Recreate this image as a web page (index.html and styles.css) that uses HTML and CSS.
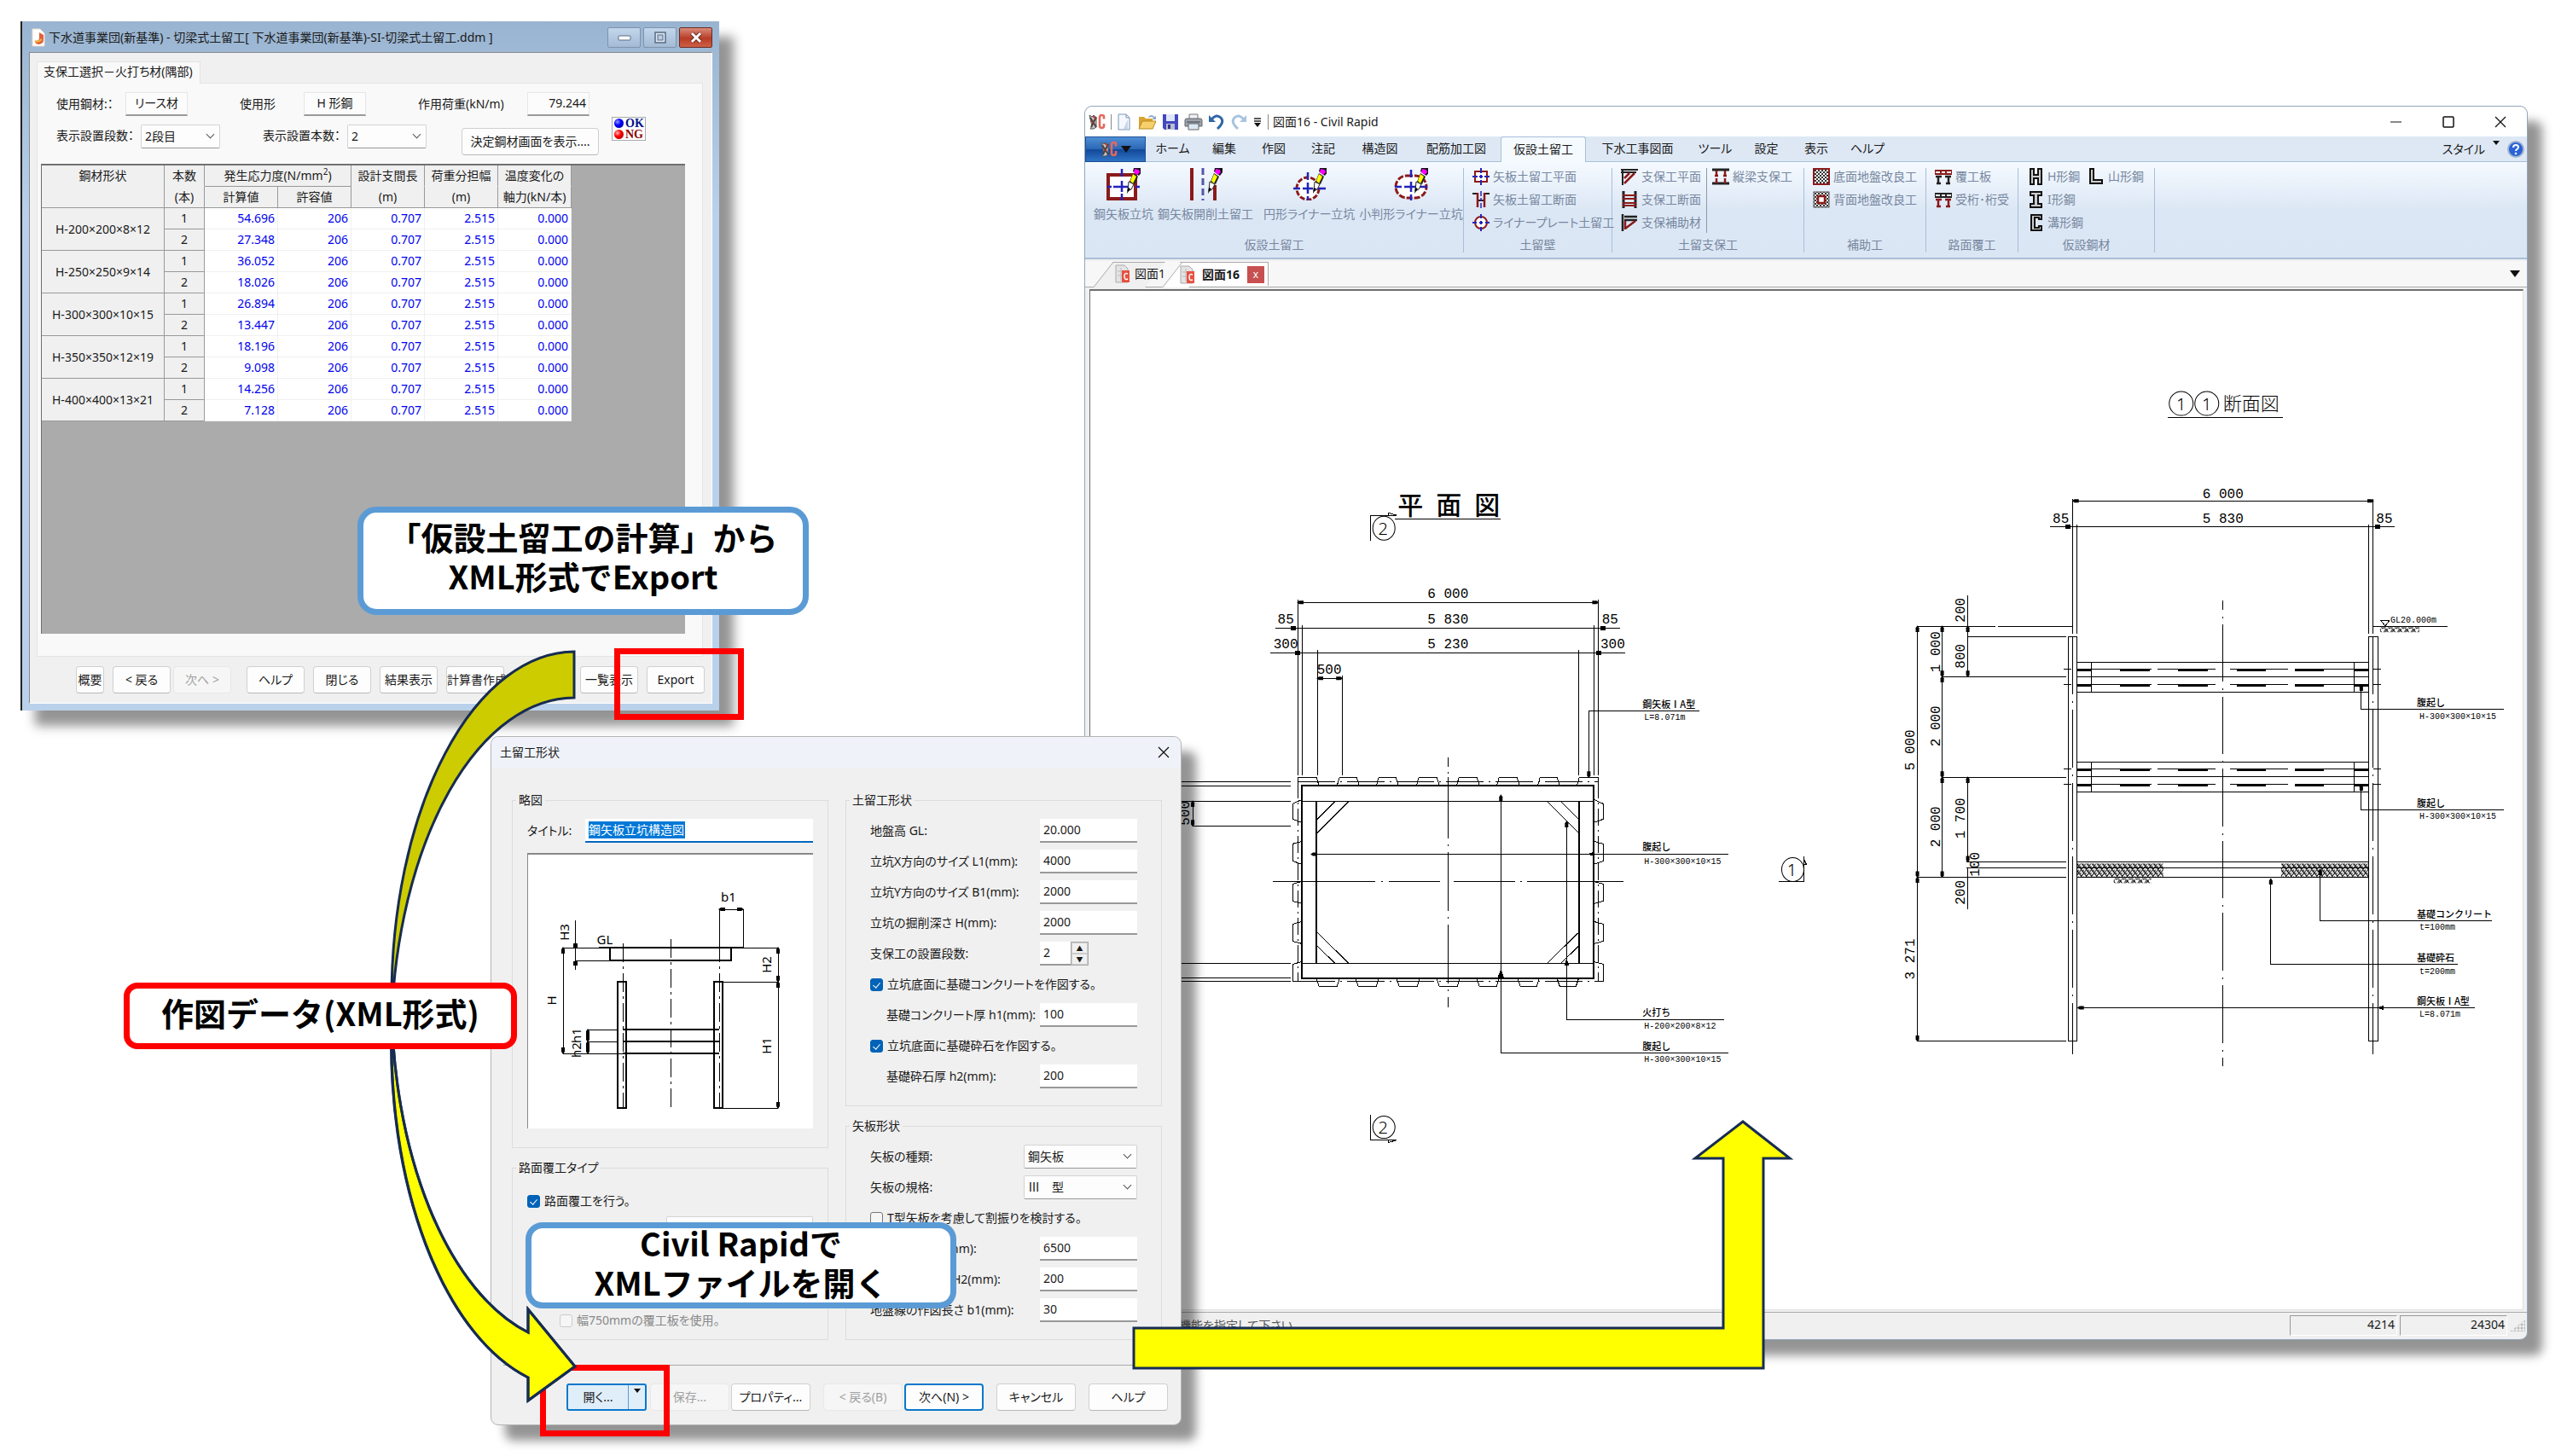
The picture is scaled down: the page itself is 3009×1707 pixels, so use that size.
FILE: index.html
```html
<!DOCTYPE html>
<html lang="ja">
<head>
<meta charset="utf-8">
<title>仮設土留工 データ連携</title>
<link rel="stylesheet" href="styles.css">
</head>
<body>
<svg class="defs" aria-hidden="true">
  <defs>
    <symbol id="logo" viewBox="0 0 20 20">
      <path d="M1 2l3 2 2-2 3 3v11l-3 2H2l2-3z" fill="#c9c4c0" stroke="#555" stroke-width="1"/>
      <path d="M2 5l7 11M9 4L3 16" stroke="#444" stroke-width="2"/>
      <path d="M5 3l4 4M3 9l4 3" stroke="#a33" stroke-width="1.5"/>
      <path d="M18 6.500V4q0-2-2.500-2T13 4.500v10q0 2.500 2.500 2.500t2.500-2.500V12" fill="none" stroke="#e5685c" stroke-width="2.600"/>
    </symbol>
    <symbol id="pen" viewBox="0 0 18 30">
      <path d="M9 0h9v5l-3 4-7-5z" fill="#111"/><path d="M10 1l5 1 1 3-3 3-4-3z" fill="#f0f"/>
      <path d="M8 6l6 4-4 9-6-3z" fill="#222"/><path d="M8 7l4 3-4 8-3-3z" fill="#ff0"/>
      <path d="M3 16l6 3-3 6-4 2z" fill="#fff" stroke="#222"/><path d="M2 23l3 1-4 6z" fill="#000"/>
    </symbol>
    <symbol id="docicon" viewBox="0 0 18 22">
      <path d="M1 1h10l4 4v16H1z" fill="#e4e4e4" stroke="#aaa"/><path d="M3 8h9M3 13h9M7 4v15" stroke="#bbb"/>
      <path d="M8 7h9v14H8z" fill="#e8503f"/><path d="M15 11q-4-2-4 3t4 3" fill="none" stroke="#fff" stroke-width="1.500"/>
    </symbol>
    <pattern id="dots" width="4" height="4" patternUnits="userSpaceOnUse"><rect width="4" height="4" fill="#fff"/><path d="M0 0h2v2H0zM2 2h2v2H2z" fill="#333"/></pattern>
    <pattern id="gravel" width="6" height="8" patternUnits="userSpaceOnUse"><path d="M0 0l3 4-3 4M6 0L3 4l3 4M1 2l2-2M4 7l2-3" fill="none" stroke="#000" stroke-width="1"/></pattern>
    <pattern id="soil" width="8" height="6" patternUnits="userSpaceOnUse"><path d="M0 6l4-6 4 6M2 6l4-6" fill="none" stroke="#000" stroke-width="1"/></pattern>
    <marker id="dot" viewBox="0 0 8 6" markerWidth="8" markerHeight="6" refX="7" refY="3" orient="auto-start-reverse" markerUnits="userSpaceOnUse"><path d="M0 1h5l3 2-3 2H0z"/></marker>
  </defs>
</svg>

<main class="desk">

<!-- CAD application -->
<section class="window cad">
  <header class="cad-title">
    <svg class="i20" viewBox="0 0 20 20"><use href="#logo"/></svg>
    <span class="bar"></span>
    <svg class="i20" viewBox="0 0 20 20"><path d="M3 1h9l4 4v14H3z" fill="#f4f8fd" stroke="#7d97b8"/><path d="M12 1v4h4" fill="none" stroke="#7d97b8"/><path d="M14 7v11H9z" fill="#c5d6ea"/></svg>
    <svg class="i22" viewBox="0 0 22 20"><path d="M1 4h6l2 2h8v12H1z" fill="#d9a531"/><path d="M5 9h16l-4 9H1z" fill="#f7d06b" stroke="#b98a1f"/><path d="M12 4q4-4 7 0l2-1v4h-4l1-2q-3-2-5 0z" fill="#8fa9c9"/></svg>
    <svg class="i20" viewBox="0 0 20 20"><path d="M1 1h18v18H3l-2-2z" fill="#4348c0"/><path d="M5 1h10v8H5z" fill="#dfe6f7"/><path d="M5 12h10v7H5z" fill="#b9bfd0"/><path d="M7 13h3v5H7z" fill="#30348c"/></svg>
    <svg class="i22" viewBox="0 0 22 20"><path d="M6 1h10v7H6z" fill="#eef2f7" stroke="#777"/><path d="M1 8q0-2 2-2h16q2 0 2 2v7H1z" fill="#9aa3af" stroke="#666"/><path d="M5 12h12v7H5z" fill="#dbe8f5" stroke="#666"/><path d="M3 10h16" stroke="#444"/></svg>
    <svg class="i20" viewBox="0 0 20 20"><path d="M4 7q6-7 11-2t-4 13" fill="none" stroke="#2f66a8" stroke-width="3"/><path d="M1 2v8h8z" fill="#2f66a8"/></svg>
    <svg class="i20" viewBox="0 0 20 20"><path d="M16 7q-6-7-11-2t4 13" fill="none" stroke="#a8c4de" stroke-width="3"/><path d="M19 2v8h-8z" fill="#a8c4de"/></svg>
    <svg class="i12" viewBox="0 0 12 20"><path d="M2 6h8M2 9h8" stroke="#222" stroke-width="1.500"/><path d="M2 11h8l-4 5z" fill="#111"/></svg>
    <span class="bar"></span>
    <h1>図面16 - Civil Rapid</h1>
    <div class="cad-sys">
      <button type="button" aria-label="最小化"><svg viewBox="0 0 16 16"><path d="M1 8h13" stroke="#111" fill="none"/></svg></button>
      <button type="button" aria-label="最大化"><svg viewBox="0 0 16 16"><rect x="2" y="2" width="12" height="12" rx="1" fill="none" stroke="#111" stroke-width="1.500"/></svg></button>
      <button type="button" aria-label="閉じる"><svg viewBox="0 0 16 16"><path d="M2 2l12 12M14 2L2 14" stroke="#111" fill="none" stroke-width="1.300"/></svg></button>
    </div>
  </header>
  <nav class="menu">
    <button class="app" type="button" aria-label="アプリケーションメニュー"><svg class="i20" viewBox="0 0 20 20"><use href="#logo"/></svg><span class="caret"></span></button>
    <div class="menu-items">
      <a href="#">ホーム</a><a href="#">編集</a><a href="#">作図</a><a href="#">注記</a><a href="#">構造図</a><a href="#">配筋加工図</a><a href="#" class="on">仮設土留工</a><a href="#">下水工事図面</a><a href="#">ツール</a><a href="#">設定</a><a href="#">表示</a><a href="#">ヘルプ</a>
    </div>
    <button class="style-menu" type="button">スタイル<span class="caret small"></span></button>
    <svg class="i20" viewBox="0 0 20 20"><circle cx="10" cy="10" r="9" fill="#2a63d8" stroke="#9fb3cc" stroke-width="2"/><path d="M7 8q0-3 3-3t3 2.500q0 1.500-1.500 2.300T10 12" fill="none" stroke="#fff" stroke-width="2"/><circle cx="10" cy="15" r="1.300" fill="#fff"/></svg>
  </nav>
  <div class="ribbon">
    <section class="group">
      <div class="big-row">
        <button type="button" class="big"><svg viewBox="0 0 40 38"><path d="M2 8h32v28H2z" fill="#fff" stroke="#8b1a1a" stroke-width="4"/><path d="M18 1v9M18 15v4M18 24v3M18 30v8M1 22h5M8 22h6M24 22h6M34 22h5M12 22h12M18 16v12" stroke="#2222bb" stroke-width="2.500"/><use href="#pen" x="23" y="0" width="18" height="30"/></svg>鋼矢板立坑</button>
        <button type="button" class="big"><svg viewBox="0 0 40 38"><path d="M4 0v38M31 20v18" stroke="#8b1a1a" stroke-width="4"/><path d="M17 0v38" stroke="#5555aa" stroke-width="3" stroke-dasharray="8 4"/><use href="#pen" x="22" y="0" width="18" height="30"/></svg>鋼矢板開削土留工</button>
        <span class="rule"></span>
        <button type="button" class="big"><svg viewBox="0 0 40 38"><circle cx="18" cy="24" r="13" fill="#fff" stroke="#8b1a1a" stroke-width="3" stroke-dasharray="6 2"/><path d="M18 5v9M18 17v13M18 33v5M1 24h8M12 24h12M28 24h11" stroke="#2222bb" stroke-width="2.500"/><use href="#pen" x="23" y="0" width="18" height="30"/></svg>円形ライナー立坑</button>
        <button type="button" class="big"><svg viewBox="0 0 40 38"><rect x="2" y="9" width="36" height="26" rx="13" fill="#fff" stroke="#8b1a1a" stroke-width="3" stroke-dasharray="7 2"/><path d="M20 2v9M20 16v12M20 31v7M1 22h8M12 22h14M30 22h9" stroke="#2222bb" stroke-width="2.500"/><use href="#pen" x="23" y="0" width="18" height="30"/></svg>小判形ライナー立坑</button>
      </div>
      <h2>仮設土留工</h2>
    </section>
    <section class="group">
      <div class="cols"><div class="col">
        <button type="button" class="small"><svg viewBox="0 0 20 20"><path d="M3 4h14v12H3z" fill="#fff" stroke="#8b1a1a" stroke-width="2"/><path d="M10 0v6M10 8v4M10 14v6M0 10h6M8 10h4M14 10h6" stroke="#2222bb" stroke-width="2"/></svg>矢板土留工平面</button>
        <button type="button" class="small"><svg viewBox="0 0 20 20"><path d="M0 3h5M15 3h5M5 11h10" stroke="#222" stroke-width="2"/><path d="M6 2v17M14 2v17" stroke="#8b1a1a" stroke-width="2.500"/><path d="M10 0v6M10 8v4M10 14v6" stroke="#2222bb" stroke-width="1.500"/></svg>矢板土留工断面</button>
        <button type="button" class="small"><svg viewBox="0 0 20 20"><circle cx="10" cy="10" r="7" fill="#fff" stroke="#8b1a1a" stroke-width="2"/><path d="M10 0v5M10 8v4M10 15v5M0 10h5M8 10h4M15 10h5" stroke="#2222bb" stroke-width="2"/></svg>ライナープレート土留工</button>
      </div></div>
      <h2>土留壁</h2>
    </section>
    <section class="group">
      <div class="cols"><div class="col">
        <button type="button" class="small"><svg viewBox="0 0 20 20"><path d="M0 2h20M2 2v18M0 5h18" stroke="#222" stroke-width="2"/><path d="M4 18L16 6M4 12l6-6" stroke="#8b1a1a" stroke-width="2.500"/></svg>支保工平面</button>
        <button type="button" class="small"><svg viewBox="0 0 20 20"><path d="M3 0v20M17 0v20" stroke="#222" stroke-width="3"/><path d="M2 5h16M2 9h16M2 14h16M2 17h16" stroke="#8b1a1a" stroke-width="2"/></svg>支保工断面</button>
        <button type="button" class="small"><svg viewBox="0 0 20 20"><path d="M2 0v20M4 3h15M4 7h15" stroke="#222" stroke-width="2.500"/><path d="M5 17L17 8M5 18V8" stroke="#8b1a1a" stroke-width="2.500"/></svg>支保補助材</button>
      </div><span class="rule"></span><div class="col">
        <button type="button" class="small"><svg viewBox="0 0 20 20"><path d="M0 2h20M0 18h20" stroke="#222" stroke-width="3"/><path d="M5 3v6M5 12v6M15 3v6M15 12v6M3 9h4M13 9h4" stroke="#8b1a1a" stroke-width="2.500"/></svg>縦梁支保工</button>
      </div></div>
      <h2>土留支保工</h2>
    </section>
    <section class="group">
      <div class="cols"><div class="col">
        <button type="button" class="small"><svg viewBox="0 0 20 20"><rect x="1" y="1" width="18" height="18" fill="url(#dots)" stroke="#8b1a1a" stroke-width="2"/></svg>底面地盤改良工</button>
        <button type="button" class="small"><svg viewBox="0 0 20 20"><rect x="1" y="1" width="18" height="18" fill="url(#dots)" stroke="#555"/><path d="M6 6h8v8H6z" fill="#fff" stroke="#8b1a1a" stroke-width="2.500"/></svg>背面地盤改良工</button>
      </div></div>
      <h2>補助工</h2>
    </section>
    <section class="group">
      <div class="cols"><div class="col">
        <button type="button" class="small"><svg viewBox="0 0 20 20"><path d="M0 3h20v4H0zM7 3v4M13 3v4" fill="#fff" stroke="#8b1a1a" stroke-width="2"/><path d="M1 10h7M12 10h7M4 10v8M16 10v8M2 18h5M13 18h5" stroke="#222" stroke-width="2.500"/></svg>覆工板</button>
        <button type="button" class="small"><svg viewBox="0 0 20 20"><path d="M0 3h20v4H0zM7 3v4M13 3v4" fill="#fff" stroke="#222" stroke-width="2"/><path d="M1 10h7M12 10h7M4 10v8M16 10v8M2 18h5M13 18h5" stroke="#8b1a1a" stroke-width="2.500"/></svg>受桁･桁受</button>
      </div></div>
      <h2>路面覆工</h2>
    </section>
    <section class="group">
      <div class="cols"><div class="col">
        <button type="button" class="small"><svg viewBox="0 0 20 20"><path d="M4 1h4v7h5V1h4v18h-4v-7H8v7H4z" fill="#ccc" stroke="#111" stroke-width="2"/></svg>H形鋼</button>
        <button type="button" class="small"><svg viewBox="0 0 20 20"><path d="M4 1h13v4h-4v10h4v4H4v-4h4V5H4z" fill="#ccc" stroke="#111" stroke-width="2"/></svg>I形鋼</button>
        <button type="button" class="small"><svg viewBox="0 0 20 20"><path d="M5 1h12v5h-3V4H9v12h5v-2h3v5H5z" fill="#ccc" stroke="#111" stroke-width="2"/></svg>溝形鋼</button>
      </div><div class="col">
        <button type="button" class="small"><svg viewBox="0 0 20 20"><path d="M3 1h4v13h10v4H3z" fill="#ccc" stroke="#111" stroke-width="2"/></svg>山形鋼</button>
      </div></div>
      <h2>仮設鋼材</h2>
    </section>
  </div>
  <div class="doc-tabs">
    <button type="button" class="doc-tab"><svg class="i18" viewBox="0 0 18 22"><use href="#docicon"/></svg><span>図面1</span></button>
    <button type="button" class="doc-tab current"><svg class="i18" viewBox="0 0 18 22"><use href="#docicon"/></svg><span>図面16</span></button>
    <span class="tab-end"><button type="button" class="tab-close" aria-label="タブを閉じる">x</button></span>
    <span class="caret tabs-caret"></span>
  </div>
  <div class="sheet">
    <svg class="drawing" viewBox="1278 342 1678 1193" preserveAspectRatio="xMinYMin meet" role="img" aria-label="平面図と断面図">
      <!-- plan: title and section marks -->
      <text class="plan-title" x="1698" y="591">平&#8194;面&#8194;図</text>
      <path d="M1635 609H1759" stroke-width="2"/>
      <g class="mark">
        <ellipse cx="1622" cy="620" rx="13" ry="14"/><text x="1621" y="620">2</text>
        <path d="M1606 635V605H1637M1627 605V602L1637 605"/>
        <ellipse cx="1622" cy="1322" rx="13" ry="13"/><text x="1621" y="1322">2</text>
        <path d="M1606 1307V1337H1637M1627 1337V1340L1637 1337"/>
        <ellipse cx="2101" cy="1020" rx="13" ry="14"/><text x="2100" y="1020">1</text>
        <path d="M2085 1034H2114V1005M2114 1008L2117 1014 2114 1014"/>
        <ellipse cx="2556" cy="474" rx="14" ry="14"/><text x="2556" y="474">1</text>
        <ellipse cx="2586" cy="474" rx="14" ry="14"/><text x="2586" y="474">1</text>
      </g>
      <text class="section-title" x="2638" y="473">断面図</text>
      <path d="M2540 490H2675"/>
      <!-- plan: dimensions -->
      <g class="dim">
        <text x="1697" y="698">6 000</text><text x="1697" y="728">5 830</text><text x="1697" y="757">5 230</text>
        <text x="1507" y="728">85</text><text x="1887" y="728">85</text><text x="1507" y="757">300</text><text x="1890" y="757">300</text><text x="1558" y="787">500</text>
      </g>
      <path class="arrows" d="M1521 707H1873"/><path class="arrows" d="M1544 796H1573"/>
      <path d="M1495 737H1899M1489 766H1905M1521 704V910M1526 734V910M1868 734V910M1873 704V910M1544 763V910M1850 763V910M1573 793V910"/>
      <path d="M1513 735h5v4h-5zM1876 735h5v4h-5zM1518 764h5v4h-5zM1871 764h5v4h-5z" fill="#000"/>
      <path d="M1278 917H1513M1278 922H1513M1278 940H1513M1398 969H1513M1278 1130H1513M1278 1147H1513M1278 1151H1513"/>
      <path class="arrows" d="M1398 940V969"/>
      <text class="dimv" transform="translate(1390 954) rotate(-90)">500</text>
      <!-- plan: sheet piles and wales -->
      <path d="M1521 917H1873M1521 1151H1873" stroke-dasharray="44 6 2 6"/>
      <path d="M1521 917V1151M1873 917V1151" stroke-dasharray="20 5 2 5"/>
      <path class="thick" d="M1526 922H1868V1148H1526zM1543 940V1130M1851 940V1130"/>
      <path d="M1526 940H1868M1526 1130H1868"/>
      <path d="M1521 917V912H1543L1546 922M1567 922L1570 912H1590L1593 922M1613 922L1616 912H1636L1639 922M1660 922L1663 912H1684L1687 922M1707 922L1710 912H1731L1734 922M1754 922L1757 912H1778L1781 922M1802 922L1805 912H1825L1828 922M1848 922L1851 912H1873V917"/>
      <path d="M1543 1148L1546 1157H1567L1570 1148M1589 1148L1592 1157H1613L1616 1148M1637 1148L1640 1157H1661L1664 1148M1684 1148L1687 1157H1708L1711 1148M1731 1148L1734 1157H1754L1757 1148M1779 1148L1782 1157H1801L1804 1148M1825 1148L1828 1157H1847L1850 1148"/>
      <path d="M1526 938L1515 943V961L1526 965M1526 987L1515 990V1010L1526 1014M1526 1034L1515 1037V1057L1526 1060M1526 1081L1515 1084V1104L1526 1107M1526 1128L1515 1131V1151H1521"/>
      <path d="M1868 938L1879 943V961L1868 965M1868 987L1879 990V1010L1868 1014M1868 1034L1879 1037V1057L1868 1060M1868 1081L1879 1084V1104L1868 1107M1868 1128L1879 1131V1151H1873"/>
      <path d="M1543 962L1565 940M1543 978L1581 940M1851 962L1829 940M1851 978L1813 940M1543 1109L1565 1130M1543 1093L1581 1130M1851 1109L1829 1130M1851 1093L1813 1130"/>
      <path d="M1697 889V900M1697 906V908M1697 912V984M1697 991V993M1697 1000V1069M1697 1076V1078M1697 1085V1154M1697 1161V1163M1697 1170V1182"/>
      <path d="M1492 1034H1612M1619 1034H1621M1628 1034H1688M1704 1034H1776M1782 1034H1784M1790 1034H1903"/>
      <!-- plan: leaders -->
      <path class="arrow-start" d="M1862 912V834H1992"/>
      <path class="arrow-start" d="M1537 1002H2026"/><path d="M1862 1002l6-2v4z" fill="#000"/>
      <path class="arrow-start" d="M1759 933V1235H2026"/><path d="M1759 1138l3 8h-6z" fill="#000"/>
      <path class="arrow-start" d="M1836 964V1196H2021"/><path d="M1836 1126l2 6h-4z" fill="#000"/>
      <g class="note">
        <text x="1925" y="826">鋼矢板ⅠA型</text><text x="1925" y="993">腹起し</text><text x="1925" y="1187">火打ち</text><text x="1925" y="1226">腹起し</text>
        <text class="code" x="1927" y="842">L=8.071m</text><text class="code" x="1927" y="1011">H-300×300×10×15</text><text class="code" x="1927" y="1204">H-200×200×8×12</text><text class="code" x="1927" y="1243">H-300×300×10×15</text>
      </g>
      <!-- section: dimensions -->
      <g class="dim">
        <text x="2605" y="581">6 000</text><text x="2605" y="610">5 830</text><text x="2415" y="610">85</text><text x="2794" y="610">85</text>
      </g>
      <path class="arrows" d="M2429 588H2781"/>
      <path d="M2402 618H2806M2429 586V744M2434 616V744M2776 616V744M2781 586V744"/>
      <path d="M2421 616h5v4h-5zM2784 616h5v4h-5z" fill="#000"/>
      <path d="M2246 735H2338M2341 735H2428M2305 747H2421M2276 794H2421M2276 912H2421M2304 1011H2421M2304 1018H2421M2246 1029H2421M2246 1221H2421M2306 699V735M2306 1018V1067"/>
      <path class="arrows" d="M2247 735V1029"/><path class="arrows" d="M2247 1029V1221"/>
      <path class="arrows" d="M2276 735V794"/><path class="arrows" d="M2276 794V912"/><path class="arrows" d="M2276 912V1029"/>
      <path class="arrows" d="M2306 735V794"/><path class="arrows" d="M2306 912V1011"/>
      <g class="dimv">
        <text transform="translate(2239 880) rotate(-90)">5 000</text><text transform="translate(2239 1125) rotate(-90)">3 271</text>
        <text transform="translate(2269 765) rotate(-90)">1 000</text><text transform="translate(2269 852) rotate(-90)">2 000</text><text transform="translate(2269 970) rotate(-90)">2 000</text>
        <text transform="translate(2298 716) rotate(-90)">200</text><text transform="translate(2298 770) rotate(-90)">800</text><text transform="translate(2298 960) rotate(-90)">1 700</text>
        <text transform="translate(2315 1014) rotate(-90)">100</text><text transform="translate(2298 1047) rotate(-90)">200</text>
      </g>
      <!-- section: ground level, piles -->
      <path d="M2781 735H2868M2790 728H2800L2795 735zM2434 747V1221M2776 747V1221"/>
      <rect x="2789" y="736" width="46" height="6" fill="url(#soil)" stroke="none"/>
      <path d="M2424 1221V747H2434M2424 1221H2434M2776 747H2787V1221H2776"/>
      <path d="M2429 747V1236M2781 747V1236" stroke-dasharray="68 8 2 8"/>
      <path d="M2605 705V716M2605 724V726M2605 733V800M2605 808V810M2605 818V885M2605 893V895M2605 902V970M2605 978V980M2605 987V1054M2605 1062V1064M2605 1071V1139M2605 1147V1149M2605 1156V1223M2605 1231V1233M2605 1240V1250"/>
      <!-- section: wales -->
      <g id="wale">
        <path d="M2434 777H2776M2434 812H2776M2434 794H2776" stroke-width="2"/>
        <path d="M2451 777V812M2759 777V812M2776 777V812" stroke-width="2"/>
        <path d="M2418 785H2427M2434 785H2521M2528 785H2596M2613 785H2681M2689 785H2776M2781 785H2790M2418 803H2427M2434 803H2521M2528 803H2596M2613 803H2681M2689 803H2776M2781 803H2790"/>
        <path class="heavy" d="M2434 786H2451M2484 786H2519M2552 786H2587M2621 786H2655M2689 786H2723M2759 786H2776M2434 804H2451M2484 804H2519M2552 804H2587M2621 804H2655M2689 804H2723M2759 804H2776"/>
      </g>
      <use href="#wale" y="117"/>
      <!-- section: base slab -->
      <path d="M2434 1011H2776M2434 1018H2776M2434 1029H2776"/>
      <rect x="2434" y="1013" width="101" height="16" fill="url(#gravel)" stroke="none"/>
      <rect x="2673" y="1013" width="103" height="16" fill="url(#gravel)" stroke="none"/>
      <rect x="2477" y="1030" width="44" height="6" fill="url(#soil)" stroke="none"/>
      <!-- section: leaders -->
      <path class="arrow-start" d="M2767 804V832H2934"/><path class="arrow-start" d="M2767 921V950H2934"/>
      <path class="arrow-start" d="M2719 1020V1080H2920"/><path class="arrow-start" d="M2661 1031V1131H2880"/>
      <path class="arrow-start" d="M2435 1182H2900"/><path d="M2787 1182l6-2v4z" fill="#000"/>
      <g class="note">
        <text class="code" x="2801" y="728">GL20.000m</text>
        <text x="2832" y="824">腹起し</text><text class="code" x="2835" y="841">H-300×300×10×15</text>
        <text x="2832" y="942">腹起し</text><text class="code" x="2835" y="958">H-300×300×10×15</text>
        <text x="2832" y="1072">基礎コンクリート</text><text class="code" x="2835" y="1088">t=100mm</text>
        <text x="2832" y="1123">基礎砕石</text><text class="code" x="2835" y="1140">t=200mm</text>
        <text x="2832" y="1174">鋼矢板ⅠA型</text><text class="code" x="2835" y="1190">L=8.071m</text>
      </g>
    </svg>
  </div>
  <footer class="status">
    <span class="hint">機能を指定して下さい</span>
    <output>4214</output><output>24304</output>
    <span class="grip"></span>
  </footer>
</section>

<!-- Design calculation -->
<section class="window calc">
  <header class="calc-title">
    <svg class="i18" viewBox="0 0 18 22"><path d="M2 1h9l5 5v15H2z" fill="#fff" stroke="#e8dcd0"/><path d="M10 5v7q0 3-5 3 0 4 5 4 5-1 5-5V8z" fill="#e2603a"/><path d="M5 15q4 2 8-2" stroke="#f4b13e" stroke-width="2" fill="none"/></svg>
    <h1>下水道事業団(新基準) - 切梁式土留工[ 下水道事業団(新基準)-SI-切梁式土留工.ddm ]</h1>
    <button type="button" aria-label="最小化"><svg viewBox="0 0 16 16"><rect x="1" y="6" width="14" height="5" rx="1" fill="#fff" stroke="#5a6b80"/></svg></button>
    <button type="button" aria-label="最大化"><svg viewBox="0 0 16 16"><rect x="2" y="2" width="12" height="12" fill="#dfe9f4" stroke="#5a6b80" stroke-width="1.500"/><rect x="5" y="5" width="6" height="6" fill="#b9cde4" stroke="#5a6b80"/></svg></button>
    <button type="button" class="close" aria-label="閉じる"><svg viewBox="0 0 16 16"><path d="M3 3l10 10M13 3L3 13" stroke="#6b2a20" stroke-width="5"/><path d="M3 3l10 10M13 3L3 13" stroke="#fff" stroke-width="3"/></svg></button>
  </header>
  <div class="calc-body">
    <div class="page-tab">支保工選択－火打ち材(隅部)</div>
    <div class="page">
      <div class="filters first">
        <span class="w81">使用鋼材:：</span><span class="value mid">リース材</span>
        <span class="w75 gap">使用形</span><span class="value mid">H 形鋼</span>
        <span class="w128 gap">作用荷重(kN/m)</span><span class="value num">79.244</span>
      </div>
      <div class="filters second">
        <label class="w99" for="stage">表示設置段数：</label><span class="pick"><select id="stage"><option>2段目</option></select></span>
        <label class="w99 gap" for="count">表示設置本数：</label><span class="pick"><select id="count"><option>2</option></select></span>
        <button type="button" class="push decide">決定鋼材画面を表示....</button>
        <div class="okng"><span class="ok">OK</span><span class="ng">NG</span></div>
      </div>
      <div class="grid">
        <table>
          <colgroup><col class="c1"><col class="c2"><col class="c3"><col class="c3"><col class="c3"><col class="c3"><col class="c3"></colgroup>
          <thead>
            <tr><th rowspan="2" class="top">鋼材形状</th><th class="open">本数</th><th colspan="2">発生応力度(N/mm<sup>2</sup>)</th><th class="open">設計支間長</th><th class="open">荷重分担幅</th><th class="open">温度変化の</th></tr>
            <tr><th>(本)</th><th>計算値</th><th>許容値</th><th>(m)</th><th>(m)</th><th>軸力(kN/本)</th></tr>
          </thead>
          <tbody>
            <tr><th rowspan="2">H-200×200×8×12</th><th>1</th><td>54.696</td><td>206</td><td>0.707</td><td>2.515</td><td>0.000</td></tr>
            <tr><th>2</th><td>27.348</td><td>206</td><td>0.707</td><td>2.515</td><td>0.000</td></tr>
            <tr><th rowspan="2">H-250×250×9×14</th><th>1</th><td>36.052</td><td>206</td><td>0.707</td><td>2.515</td><td>0.000</td></tr>
            <tr><th>2</th><td>18.026</td><td>206</td><td>0.707</td><td>2.515</td><td>0.000</td></tr>
            <tr><th rowspan="2">H-300×300×10×15</th><th>1</th><td>26.894</td><td>206</td><td>0.707</td><td>2.515</td><td>0.000</td></tr>
            <tr><th>2</th><td>13.447</td><td>206</td><td>0.707</td><td>2.515</td><td>0.000</td></tr>
            <tr><th rowspan="2">H-350×350×12×19</th><th>1</th><td>18.196</td><td>206</td><td>0.707</td><td>2.515</td><td>0.000</td></tr>
            <tr><th>2</th><td>9.098</td><td>206</td><td>0.707</td><td>2.515</td><td>0.000</td></tr>
            <tr><th rowspan="2">H-400×400×13×21</th><th>1</th><td>14.256</td><td>206</td><td>0.707</td><td>2.515</td><td>0.000</td></tr>
            <tr><th>2</th><td>7.128</td><td>206</td><td>0.707</td><td>2.515</td><td>0.000</td></tr>
          </tbody>
        </table>
      </div>
    </div>
    <div class="calc-actions">
      <button type="button" class="push narrow">概要</button>
      <div class="pair"><button type="button" class="push">&lt; 戻る</button><button type="button" class="push" disabled>次へ &gt;</button></div>
      <button type="button" class="push apart">ヘルプ</button>
      <button type="button" class="push">閉じる</button>
      <button type="button" class="push">結果表示</button>
      <button type="button" class="push">計算書作成</button>
      <button type="button" class="push far">一覧表示</button>
      <button type="button" class="push">Export</button>
    </div>
  </div>
</section>

<!-- Shape dialog -->
<section class="window dialog">
  <header class="dialog-title"><h1>土留工形状</h1>
    <button type="button" aria-label="閉じる"><svg viewBox="0 0 16 16"><path d="M2 2l12 12M14 2L2 14" stroke="#111" fill="none" stroke-width="1.300"/></svg></button>
  </header>
  <form class="dialog-body">
    <div class="side">
      <fieldset class="sketch">
        <legend>略図</legend>
        <div class="name-row"><label for="title">タイトル:</label><input id="title" class="selected" value="鋼矢板立坑構造図"></div>
        <svg class="figure" viewBox="618 1002 334 321" role="img" aria-label="立坑の略図">
          <g class="fine">
            <path d="M842 1110V1066H870V1111M673 1079V1137M659 1111H714M673 1126H714M870 1111H911M846 1151H911M836 1299H911M688 1207H723M688 1221H723M659 1235H730"/>
            <path class="arrows" d="M842 1066H870"/><path class="arrows" d="M659 1111V1235"/><path class="arrows" d="M911 1111V1151"/><path class="arrows" d="M911 1151V1299"/><path class="arrows" d="M688 1207V1221"/><path class="arrows" d="M688 1221V1235"/>
            <path d="M671 1106h4v4h-4zM671 1127h4v4h-4z" fill="#000"/>
            <path d="M785 1101V1302" stroke-dasharray="22 5 3 5"/><path d="M729 1106V1299M842 1106V1299" stroke-dasharray="22 5 3 5"/>
          </g>
          <path class="bold" d="M701 1111H870M714 1111V1126H856V1111M723 1151H733V1299H723zM836 1151H846V1299H836zM729 1207H842M729 1221H842M729 1235H842"/>
          <text x="853" y="1051">b1</text><text x="708" y="1101">GL</text>
          <text transform="translate(660 1093) rotate(-90)">H3</text><text transform="translate(645 1173) rotate(-90)">H</text>
          <text transform="translate(897 1131) rotate(-90)">H2</text><text transform="translate(897 1226) rotate(-90)">H1</text>
          <text transform="translate(674 1214) rotate(-90)">h1</text><text transform="translate(674 1231) rotate(-90)">h2</text>
        </svg>
      </fieldset>
      <fieldset class="cover">
        <legend>路面覆工タイプ</legend>
        <label class="tick"><input type="checkbox" checked>路面覆工を行う。</label>
        <span class="pick cover-pick"><select aria-label="覆工タイプ" disabled><option></option></select></span>
        <label class="tick off"><input type="checkbox" disabled>幅750mmの覆工板を使用。</label>
      </fieldset>
    </div>
    <div class="side">
      <fieldset class="rows">
        <legend>土留工形状</legend>
        <div class="row"><label for="gl">地盤高 GL:</label><input id="gl" value="20.000"></div>
        <div class="row"><label for="l1">立坑X方向のサイズ L1(mm):</label><input id="l1" value="4000"></div>
        <div class="row"><label for="b1">立坑Y方向のサイズ B1(mm):</label><input id="b1" value="2000"></div>
        <div class="row"><label for="h">立坑の掘削深さ H(mm):</label><input id="h" value="2000"></div>
        <div class="row"><label for="n">支保工の設置段数:</label><span class="spin"><input id="n" value="2"><span class="steps"><button type="button" aria-label="増やす">▲</button><button type="button" aria-label="減らす">▼</button></span></span></div>
        <div class="row"><label class="tick"><input type="checkbox" checked>立坑底面に基礎コンクリートを作図する。</label></div>
        <div class="row sub"><label for="h1">基礎コンクリート厚 h1(mm):</label><input id="h1" value="100"></div>
        <div class="row"><label class="tick"><input type="checkbox" checked>立坑底面に基礎砕石を作図する。</label></div>
        <div class="row sub"><label for="h2">基礎砕石厚 h2(mm):</label><input id="h2" value="200"></div>
      </fieldset>
      <fieldset class="rows">
        <legend>矢板形状</legend>
        <div class="row"><label for="kind">矢板の種類:</label><span class="pick"><select id="kind"><option>鋼矢板</option></select></span></div>
        <div class="row"><label for="spec">矢板の規格:</label><span class="pick"><select id="spec"><option>Ⅲ　型</option></select></span></div>
        <div class="row"><label class="tick"><input type="checkbox">T型矢板を考慮して割振りを検討する。</label></div>
        <div class="row"><label for="len">矢板の長さH1(mm):</label><input id="len" value="6500"></div>
        <div class="row"><label for="top">矢板の天端深さH2(mm):</label><input id="top" value="200"></div>
        <div class="row"><label for="gline">地盤線の作図長さ b1(mm):</label><input id="gline" value="30"></div>
      </fieldset>
    </div>
  </form>
  <footer class="dialog-actions">
    <div class="pair"><div class="split"><button type="button">開く...</button><button type="button" aria-label="開くメニュー"><span class="caret small"></span></button></div><button type="button" class="push" disabled>保存...</button><button type="button" class="push">プロパティ...</button></div>
    <div class="pair"><button type="button" class="push" disabled>&lt; 戻る(B)</button><button type="button" class="push primary">次へ(N) &gt;</button></div>
    <button type="button" class="push">キャンセル</button>
    <button type="button" class="push">ヘルプ</button>
  </footer>
</section>

<!-- Annotations -->
<div class="frame frame-export"></div>
<div class="frame frame-open"></div>
<svg class="flow" viewBox="0 0 3009 1707" aria-hidden="true">
  <path d="M459 1169A216 406 0 0 0 619 1562V1535L674 1602 619 1642V1615A216 406 0 0 1 459 1223z" fill="#ffff00"/>
  <path d="M673 764A215 406 0 0 0 459 1170 215 406 0 0 0 459 1196 215 406 0 0 1 673 818z" fill="#cccc00"/>
  <path d="M459 1169A216 406 0 0 0 619 1562V1535L674 1602 619 1642V1615A216 406 0 0 1 459 1196"/>
  <path d="M1329 1557H2020V1358H1987L2043 1315 2098 1358H2067V1604H1329z" fill="#ffff00"/>
</svg>
<p class="callout from-calc">「仮設土留工の計算」から<br>XML形式でExport</p>
<p class="callout data">作図データ(XML形式)</p>
<p class="callout to-cad">Civil Rapidで<br>XMLファイルを開く</p>
</main>
</body>
</html>
```
FILE: styles.css
```css
* { box-sizing: border-box; }
body { margin: 0; background: #fff; color: #1a1a1a; font: 14px/20px "Noto Sans", "Noto Sans CJK JP", sans-serif; font-feature-settings: "palt"; }
h1, h2, p { margin: 0; font-weight: 400; font-size: 14px; }
button, input, select { font: inherit; color: inherit; font-feature-settings: inherit; border-radius: 0; margin: 0; padding: 0; border: 0; background: none; }
button, label, h1, h2, th, td, legend { white-space: nowrap; }
a { color: inherit; text-decoration: none; }
svg { display: block; }
.defs { position: absolute; width: 0; height: 0; }
.desk { position: relative; min-height: 100vh; overflow: hidden; }
.window { position: absolute; display: flex; flex-direction: column; box-shadow: 17px 18px 12px rgba(0, 0, 0, .42); }
.i12 { width: 12px; height: 20px; }
.i18 { width: 18px; height: 22px; }
.i20 { width: 20px; height: 20px; }
.i22 { width: 22px; height: 20px; }
.caret { display: block; width: 0; height: 0; border: 6px solid transparent; border-top: 8px solid #111; border-bottom: 0; }
.caret.small { border-width: 5px 4px 0; }
.bar { width: 1px; height: 18px; background: #888; }

/* push buttons and drop-downs */
.push { height: 32px; min-width: 68px; background: #fdfdfd; border: 1px solid #d0d0d0; border-bottom-color: #b8b8b8; border-radius: 4px; text-align: center; }
.push:disabled { color: #a0a0a0; background: #f6f6f6; border-color: #e8e8e8; }
.pair { display: flex; gap: 3px; }
.pick { position: relative; display: block; }
.pick select { appearance: none; width: 100%; height: 28px; padding: 0 4px; background: #fdfdfd; border: 1px solid #d4d4d4; border-bottom-color: #999; border-radius: 2px; opacity: 1; }
.pick::after { content: ""; position: absolute; right: 8px; top: 8px; width: 6px; height: 6px; border: solid #555; border-width: 0 1px 1px 0; transform: rotate(45deg); pointer-events: none; }

/* calculation window */
.calc { left: 24px; top: 25px; width: 819px; padding: 0 8px 8px; background: linear-gradient(#99b4d1, #b9d1ea 230px); border-left: 2px solid #222; }
.calc-title { height: 36px; display: flex; align-items: center; gap: 3px; padding: 2px 0 0 2px; }
.calc-title h1 { flex: 1; }
.calc-title button { width: 39px; height: 24px; display: grid; place-items: center; border: 1px solid #7f93ab; border-radius: 2px; background: linear-gradient(#c3d6eb, #a3bbd6); }
.calc-title button svg { width: 18px; height: 16px; }
.calc-title .close { background: linear-gradient(#d98b7c, #b83c25 55%, #cf5f48); border-color: #6b2a20; }
.calc-body { background: #f0f0f0; border: 1px solid #888; border-right-color: #fff; border-bottom-color: #fff; padding: 10px 10px 0 8px; }
.page-tab { width: 192px; height: 26px; padding: 0 7px; background: #f9f9f9; border: 1px solid #e4e4e4; border-bottom: 0; position: relative; z-index: 1; line-height: 22px; white-space: nowrap; }
.page { margin-top: -1px; background: #f9f9f9; border: 1px solid #e4e4e4; padding: 10px 20px 26px 4px; }
.filters { display: flex; align-items: flex-start; padding-left: 18px; }
.filters.first { height: 29px; }
.filters.first > span { line-height: 28px; white-space: nowrap; }
.filters.second { height: 55px; }
.filters.second label { line-height: 44px; }
.w75 { width: 75px; } .w81 { width: 81px; } .w99 { width: 99px; } .w128 { width: 128px; }
.filters.first .gap { margin-left: 61px; }
.filters.second .gap { margin-left: 50px; }
.value { width: 73px; height: 28px; background: #fcfcfc; border: 1px solid #e6e6e6; border-bottom: 2px solid #999; }
.filters.first .value { line-height: 24px; }
.mid { text-align: center; }
.num { text-align: right; padding-right: 3px; }
.filters .pick { width: 93px; margin-top: 9px; }
.decide { width: 161px; margin: 13px 15px 0 41px; }
.okng { width: 40px; height: 28px; border: 1px solid #aaa; background: #fff; font: 700 14px/13px "Liberation Serif", serif; }
.okng span { display: flex; align-items: center; gap: 2px; padding-left: 2px; }
.okng span::before { content: ""; width: 11px; height: 11px; border-radius: 50%; }
.ok { color: #00128a; } .ok::before { background: radial-gradient(circle at 35% 35%, #99f, #00f 40%, #008); }
.ng { color: #8a0000; } .ng::before { background: radial-gradient(circle at 35% 35%, #fbb, #f00 40%, #900); }
.grid { height: 551px; background: #ababab; border: solid #707070; border-width: 2px 0 0 1px; }
table { border-collapse: separate; border-spacing: 0; table-layout: fixed; width: 621px; height: 300px; }
.c1 { width: 144px; } .c2 { width: 47px; } .c3 { width: 86px; }
th, td { padding: 0 3px; height: 25px; line-height: 20px; font-weight: 400; }
th { background: #f0f0f0; border: solid #999; border-width: 0 1px 1px 0; padding: 0; }
th.open { border-bottom-color: #f0f0f0; }
th.top { vertical-align: top; padding-top: 2px; }
td { background: #fff; border: solid #f0f0f0; border-width: 0 1px 1px 0; color: #0000f0; text-align: right; }
sup { font-size: 10px; line-height: 8px; }
.calc-actions { display: flex; gap: 10px; padding: 11px 0 11px 46px; }
.calc-actions .push { width: 68px; }
.calc-actions .narrow { min-width: 33px; width: 33px; }
.calc-actions .apart { margin-left: 8px; }
.calc-actions .far { margin-left: 79px; }

/* shape dialog */
.dialog { left: 575px; top: 863px; width: 810px; background: #f0f0f0; border: 1px solid #b4b4b4; border-radius: 9px; }
.dialog-title { height: 36px; display: flex; align-items: center; justify-content: space-between; padding: 0 12px 0 10px; background: #eff3f9; border-radius: 9px 9px 0 0; }
.dialog-title button svg { width: 16px; height: 16px; }
.dialog-body { display: grid; grid-template-columns: 1fr 1fr; gap: 20px; padding: 28px 22px 29px 24px; }
.side { display: flex; flex-direction: column; gap: 13px; }
fieldset { margin: 0; border: 1px solid #dcdcdc; min-width: 0; }
legend { padding: 0 3px; line-height: 20px; }
.sketch { padding: 12px 17px 22px; height: 418px; }
.cover { padding: 19px 17px 12px; flex: 1; display: flex; flex-direction: column; }
.sketch legend, .cover legend { margin-left: -13px; }
.rows { padding: 12px 28px 20px; display: flex; flex-direction: column; gap: 8px; }
.rows legend { margin-left: -24px; }
.row { display: flex; align-items: center; justify-content: space-between; height: 28px; }
.row.sub { padding-left: 19px; }
.dialog input:not([type="checkbox"]) { width: 114px; height: 28px; padding: 0 4px 2px; background: #fff; border-bottom: 2px solid #999; }
.name-row { display: flex; justify-content: space-between; align-items: center; margin-bottom: 12px; }
.dialog input.selected:not([type="checkbox"]) { width: 267px; color: #fff; border-bottom-color: #0067c0; background: linear-gradient(#0078d7, #0078d7) 4px 3px / 113px 20px no-repeat #fff; }
.figure { width: 100%; background: #fff; border: solid #888; border-width: 2px 0 0 1px; }
.figure text { font: 15px "Noto Sans", sans-serif; text-anchor: middle; dominant-baseline: central; }
.figure path { fill: none; stroke: #000; shape-rendering: crispEdges; }
.figure .bold { stroke-width: 2; }
.tick { display: flex; align-items: center; gap: 5px; height: 20px; }
.tick input { appearance: none; width: 15px; height: 15px; border: 1px solid #777; border-radius: 3px; background: #f6f6f6; position: relative; flex: none; }
.tick input:checked { background: #0063b8; border-color: #0063b8; }
.tick input:checked::after { content: ""; position: absolute; left: 4px; top: 2px; width: 4px; height: 7px; border: solid #fff; border-width: 0 1px 1px 0; transform: rotate(40deg); }
.tick.off { color: #888; margin: auto 0 0 38px; }
.tick.off input { border-color: #ccc; }
.cover-pick { width: 172px; margin: 8px 0 0 auto; }
.row .pick { width: 133px; }
.dialog input#n { width: 36px; }
.spin { display: flex; width: 114px; }
.steps { display: flex; flex-direction: column; width: 21px; height: 28px; border: 1px solid #aaa; }
.steps button { flex: 1; font-size: 8px; line-height: 10px; background: #f0f0f0; border: 1px solid #ccc; }
.dialog-actions { display: flex; gap: 15px; margin: 0 14px; padding: 21px 0 16px 74px; border-top: 1px solid #a8a8a8; }
.dialog-actions .push { width: 93px; }
.dialog-actions .pair { gap: 2px; }
.push.primary { border: 2px solid #0a78cc; }
.split { display: flex; width: 94px; height: 32px; margin-right: 2px; border: 2px solid #0a78cc; border-radius: 3px; background: #e0eef9; }
.split button { flex: 1; }
.split button + button { flex: 0 0 20px; display: flex; align-items: center; justify-content: center; border-left: 1px solid #5a9bd0; }

/* CAD window */
.cad { left: 1271px; right: 46px; top: 124px; background: #f0f0f0; border: 1px solid #93a5bb; border-radius: 9px; }
.cad-title { height: 35px; display: flex; align-items: center; gap: 6px; padding: 0 0 0 4px; background: #fff; border-radius: 9px 9px 0 0; }
.cad-title .bar { margin-right: -1px; }
.cad-title h1 { margin-right: auto; }
.cad-sys { display: flex; gap: 45px; padding-right: 23px; }
.cad-sys svg { width: 16px; height: 16px; }
.menu { display: flex; align-items: center; height: 30px; background: #dee8f5; border-bottom: 1px solid #a9bfd9; padding-right: 3px; }
.app { display: flex; align-items: center; justify-content: center; gap: 4px; width: 71px; height: 30px; background: linear-gradient(#4f8fd6, #2a66b4 50%, #12489a 52%, #2f74c4); border: 1px solid #1c4f93; }
.menu-items { display: grid; grid-template-columns: 63px 58px 58px 58px 75px 104px 100px 121px 61px 59px 58px 62px; margin-right: auto; }
.menu-items a { height: 30px; line-height: 28px; text-align: center; white-space: nowrap; }
.menu-items .on { background: #f5faff; border: 1px solid #a9bfd9; border-bottom: 0; border-radius: 3px 3px 0 0; line-height: 27px; }
.style-menu { display: flex; align-items: center; gap: 9px; margin-right: 9px; }
.ribbon { display: grid; grid-template-columns: 444px 174px 225px 143px 108px 160px; height: 114px; padding: 7px 0 6px; background: linear-gradient(#f5faff, #dce7f5 50%, #dbe6f4); border-bottom: 2px solid #a9bfd9; color: #7787a0; }
.group { display: flex; flex-direction: column; justify-content: space-between; border-right: 1px solid #a9bfd9; }
.group h2 { text-align: center; line-height: 18px; }
.big-row { display: flex; gap: 5px; padding: 0 5px 0 10px; }
.big { display: flex; flex-direction: column; align-items: center; gap: 6px; line-height: 20px; }
.big svg { width: 40px; height: 38px; }
.rule { width: 1px; height: 76px; background: #8d99a8; margin: 0 1px; }
.cols { display: flex; gap: 5px; padding-left: 10px; height: 76px; }
.col { display: flex; flex-direction: column; gap: 7px; }
.small { display: flex; align-items: center; gap: 4px; height: 20px; }
.small svg { width: 20px; height: 20px; }
.doc-tabs { display: flex; align-items: center; height: 31px; margin-top: 2px; background: #f7f7f7; border-bottom: 1px solid #aaa; padding: 0 8px 0 35px; }
.doc-tab { position: relative; display: flex; align-items: center; gap: 5px; height: 28px; margin-right: 17px; z-index: 0; }
.doc-tab::before { content: ""; position: absolute; z-index: -1; left: -14px; width: 60px; top: 0; bottom: -2px; background: #f0f0f0; border: solid #aaa; border-width: 1px 0 0 1px; transform: skewX(-38deg); }
.doc-tab.current { font-weight: 700; margin-right: 0; gap: 8px; background: #fff; border-top: 1px solid #aaa; }
.doc-tab.current::before { background: #fff; width: 30px; left: -9px; top: -1px; }
.tab-end { display: flex; align-items: center; height: 28px; padding: 0 4px 0 9px; background: #fff; border: solid #aaa; border-width: 1px 1px 0 0; }
.tab-close { width: 20px; height: 20px; background: #c75050; color: #fff; font-size: 12px; line-height: 18px; }
.tabs-caret { margin-left: auto; }
.sheet { margin: 2px 4px 2px 5px; background: #fff; border: 1px solid #e0e0e0; border-top: 2px solid #707070; border-left-color: #707070; }
.drawing { width: 100%; }
.drawing path, .drawing ellipse { fill: none; stroke: #000; stroke-width: 1; }
.drawing path { shape-rendering: crispEdges; }
.drawing path[fill="#000"], .figure path[fill="#000"] { fill: #000; }
.drawing .thick { stroke-width: 2; }
.drawing .heavy { stroke-width: 3; }
.arrows { marker-start: url(#dot); marker-end: url(#dot); }
.arrow-start { marker-start: url(#dot); }
.drawing text { dominant-baseline: central; fill: #000; }
.plan-title, .section-title, .mark text, .dim, .dimv { text-anchor: middle; }
.plan-title { font-size: 30px; font-weight: 500; font-family: "Noto Sans CJK JP", sans-serif; font-feature-settings: normal; }
.section-title { font-size: 22px; font-weight: 300; }
.mark text { font-size: 20px; font-weight: 300; }
.dim, .dimv { font: 16px "Liberation Mono", monospace; }
.note { font: 500 11px "Noto Sans CJK JP", sans-serif; }
.note .code { font: 10px "Liberation Mono", monospace; }
.status { display: flex; align-items: center; height: 32px; padding: 4px 2px 4px 10px; border-top: 1px solid #aaa; }
.hint { flex: 1; padding-left: 100px; color: #555; }
.status output { width: 126px; height: 24px; margin-right: 3px; padding-right: 2px; text-align: right; border: 1px solid #fff; border-top-color: #999; border-left-color: #999; }
.grip { width: 18px; height: 14px; background: radial-gradient(circle, #bbb 1px, transparent 2px) 0 0 / 4px 4px; clip-path: polygon(100% 0, 100% 100%, 0 100%); }

/* annotations */
.frame { position: absolute; border: 7px solid #f00; }
.frame-export { left: 720px; top: 760px; width: 152px; height: 84px; }
.frame-open { left: 633px; top: 1600px; width: 152px; height: 84px; }
.flow { position: absolute; left: 0; top: 0; width: 3009px; height: 1707px; pointer-events: none; }
.flow path { stroke: #172c51; stroke-width: 3; fill: none; }
.flow path[fill="#ffff00"] { fill: #ff0; }
.flow path[fill="#cccc00"] { fill: #cc0; }
.callout { position: absolute; display: grid; place-content: center; text-align: center; background: #fff; border: 7px solid #5b9bd5; border-radius: 22px; color: #000; font: 700 38px/46px "Noto Sans CJK JP", sans-serif; font-feature-settings: normal; white-space: nowrap; }
.from-calc { left: 419px; top: 594px; width: 529px; height: 127px; padding-bottom: 12px; }
.data { left: 145px; top: 1152px; width: 461px; height: 78px; padding-bottom: 8px; border-color: #f00; border-radius: 16px; }
.to-cad { left: 616px; top: 1433px; width: 505px; height: 101px; padding-bottom: 8px; border-radius: 20px; }
```
